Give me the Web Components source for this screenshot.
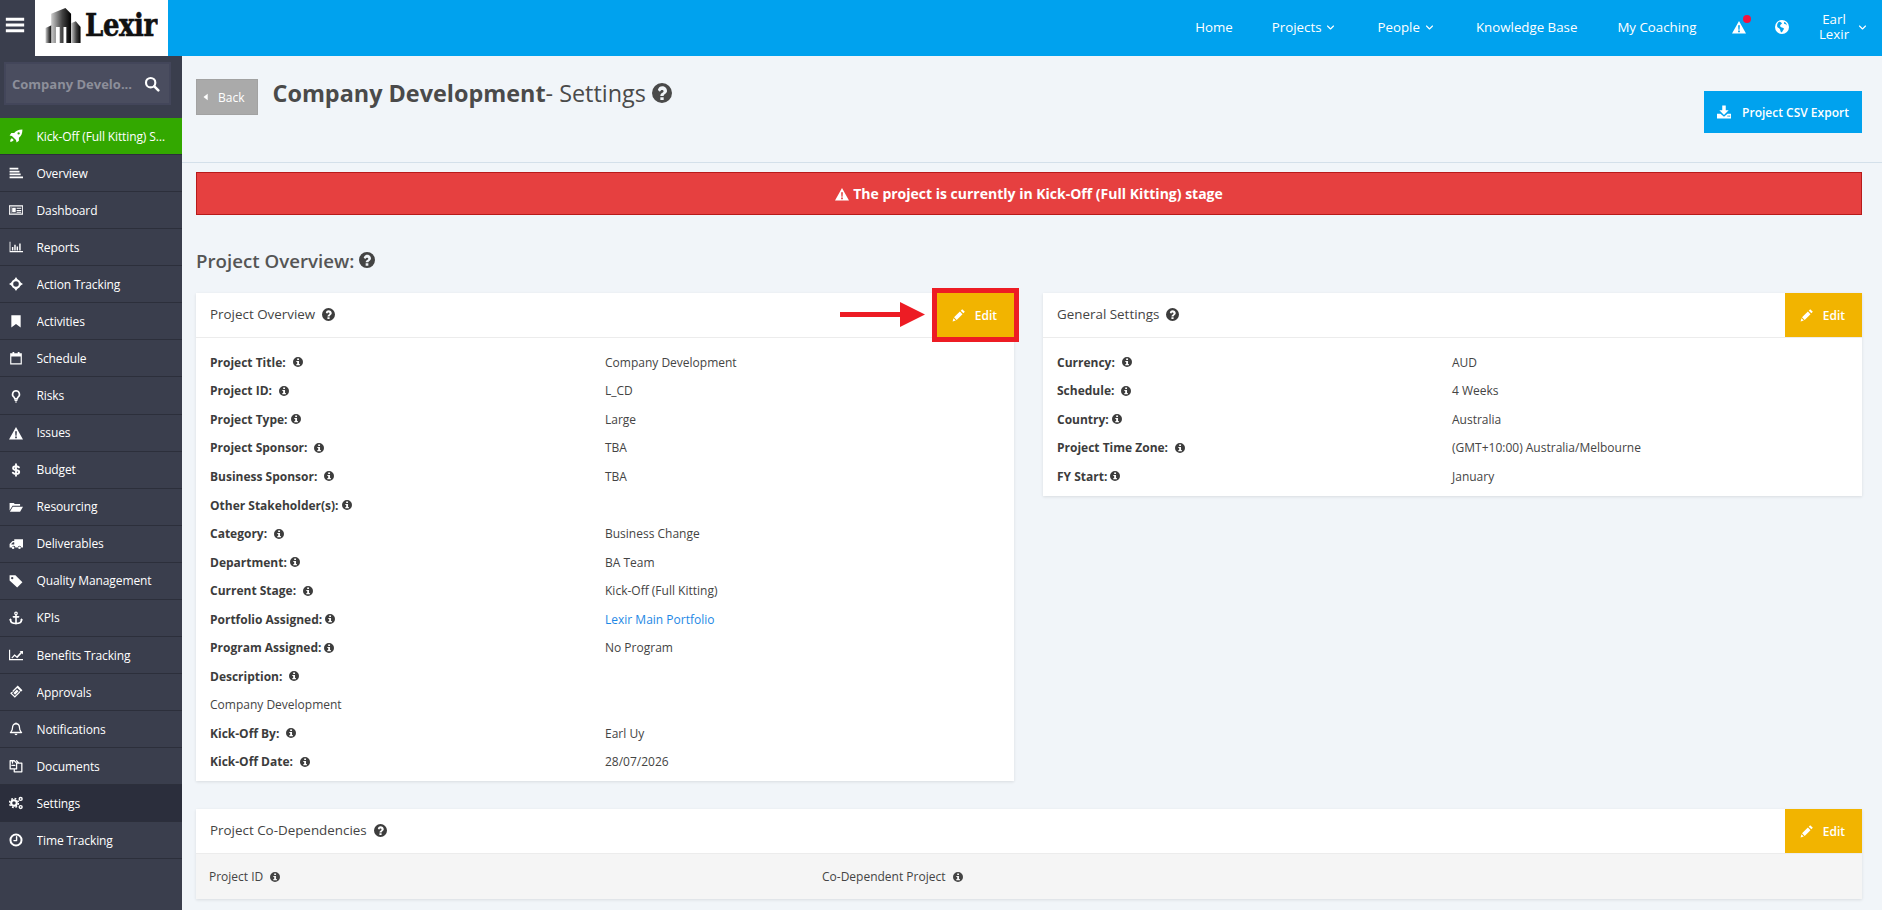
<!DOCTYPE html>
<html>
<head>
<meta charset="utf-8">
<title>Company Development - Settings</title>
<style>
  html, body { margin: 0; height: 100%; overflow: hidden; }
  body { font-family: "Open Sans", "Liberation Sans", sans-serif; font-size: 12px; color: #444; background: #f1f5f9; }
</style>
</head>
<body>
<app-shell>
  <top-bar slot="top"></top-bar>
  <side-nav slot="side">
    <nav-item icon="rocket" class="stage">Kick-Off (Full Kitting) Stage</nav-item>
    <nav-item icon="overview">Overview</nav-item>
    <nav-item icon="newspaper">Dashboard</nav-item>
    <nav-item icon="chart">Reports</nav-item>
    <nav-item icon="crosshairs">Action Tracking</nav-item>
    <nav-item icon="bookmark">Activities</nav-item>
    <nav-item icon="calendar">Schedule</nav-item>
    <nav-item icon="bulb">Risks</nav-item>
    <nav-item icon="warning">Issues</nav-item>
    <nav-item icon="dollar">Budget</nav-item>
    <nav-item icon="folder">Resourcing</nav-item>
    <nav-item icon="truck">Deliverables</nav-item>
    <nav-item icon="tag">Quality Management</nav-item>
    <nav-item icon="anchor">KPIs</nav-item>
    <nav-item icon="linechart">Benefits Tracking</nav-item>
    <nav-item icon="ticket">Approvals</nav-item>
    <nav-item icon="bell">Notifications</nav-item>
    <nav-item icon="files">Documents</nav-item>
    <nav-item icon="cogs" class="active">Settings</nav-item>
    <nav-item icon="clock">Time Tracking</nav-item>
  </side-nav>

  <page-header></page-header>
  <alert-banner>The project is currently in Kick-Off (Full Kitting) stage</alert-banner>
  <section-title>Project Overview:</section-title>

  <div class="cols" style="display:grid;grid-template-columns:818px 819px;column-gap:29px;align-items:start;">
    <info-card heading="Project Overview" marked>
      <info-row label="Project Title:">Company Development</info-row>
      <info-row label="Project ID:">L_CD</info-row>
      <info-row label="Project Type:" tight>Large</info-row>
      <info-row label="Project Sponsor:">TBA</info-row>
      <info-row label="Business Sponsor:">TBA</info-row>
      <info-row label="Other Stakeholder(s):" tight></info-row>
      <info-row label="Category:">Business Change</info-row>
      <info-row label="Department:" tight>BA Team</info-row>
      <info-row label="Current Stage:">Kick-Off (Full Kitting)</info-row>
      <info-row label="Portfolio Assigned:" tight><span style="color:#1e88e5">Lexir Main Portfolio</span></info-row>
      <info-row label="Program Assigned:" tight>No Program</info-row>
      <info-row label="Description:"></info-row>
      <info-row plain>Company Development</info-row>
      <info-row label="Kick-Off By:">Earl Uy</info-row>
      <info-row label="Kick-Off Date:">28/07/2026</info-row>
    </info-card>
    <info-card heading="General Settings">
      <info-row label="Currency:">AUD</info-row>
      <info-row label="Schedule:">4 Weeks</info-row>
      <info-row label="Country:" tight>Australia</info-row>
      <info-row label="Project Time Zone:">(GMT+10:00) Australia/Melbourne</info-row>
      <info-row label="FY Start:" tight>January</info-row>
    </info-card>
  </div>

  <info-card heading="Project Co-Dependencies" flush style="margin-top:28px">
    <table-head first="Project ID" second="Co-Dependent Project"></table-head>
  </info-card>
</app-shell>

<script>
// icons are drawn on a 24 box, all filled with currentColor unless the markup says otherwise
const S = 'fill="none" stroke="currentColor" stroke-linecap="round" stroke-linejoin="round"';
const ICONS = {
  rocket: '<path fill-rule="evenodd" d="M23 1c-7 0-11 2-14 6H4L1 11l4 1 7 7 1 4 4-3v-5c4-3 6-7 6-14zM16.500 5.500a2 2 0 1 1 0 4 2 2 0 0 1 0-4z"/><path d="M5 16c-2 1-3 3-3 6 3 0 5-1 6-3z"/>',
  overview: '<path d="M1 3h15v3H1zM1 8h17v3H1zM1 13h19v3H1zM1 18h23v3H1z"/>',
  newspaper: '<path fill-rule="evenodd" d="M0 4h24v16H0zM1.500 6v12h21V6zM3 7h1v10H3zM5.500 8h6v8h-6zM13 8h8v2h-8zM13 12h8v1.500h-8zM13 15h8v1.500h-8z"/>',
  chart: '<path d="M1 3h1.500v16H24v2H1zM5 12h2.500v6H5zM9 8h2.500v10H9zM13 11h2.500v7H13zM17.500 6H20v12h-2.500z"/>',
  crosshairs: `<circle cx="12" cy="12" r="6.500" ${S} stroke-width="3.400"/><path d="M12 0l3.500 5.500h-7zM12 24l3.500-5.500h-7zM0 12l5.500-3.500v7zM24 12l-5.500-3.500v7z"/>`,
  bookmark: '<path d="M4 2h16v21l-8-6-8 6z"/>',
  calendar: '<path fill-rule="evenodd" d="M2 4h4V1.500h3V4h6V1.500h3V4h4v19H2zM4 9.500V21h16V9.500z"/>',
  bulb: `<path ${S} stroke-width="2.800" d="M12 3a6 6 0 0 1 3.500 10.800c-.8.700-1.200 1.700-1.300 3.200H9.800c-.1-1.500-.5-2.500-1.300-3.200A6 6 0 0 1 12 3z"/><path d="M9.500 18.500h5v2h-5zM10.500 21.500h3V23h-3z"/>`,
  warning: '<path fill-rule="evenodd" d="M12 1.500L24 23H0zM10.500 9l.5 7.500h2l.5-7.500zM10.500 18v3h3v-3z"/>',
  dollar: `<path ${S} stroke-width="3.200" d="M17 7.500C16 6 14 5.500 12 5.500c-3 0-5 1.300-5 3.300 0 5 10.500 1.500 10.500 6.700 0 2-2.300 3.500-5.500 3.500-2.300 0-4.200-.8-5.500-2.500M12 2v20"/>`,
  folder: '<path d="M1 5h7l2 2h9v3H6l-5 8zM6.500 11.500H24L19 20H1.500z"/>',
  truck: '<path fill-rule="evenodd" d="M9 4h15v14h-3a3 3 0 0 0-6 0h-4a3 3 0 0 0-6 0H1v-6l5-5h3zM7 9l-3 3v1h5V9z"/><circle cx="7" cy="18.500" r="2.200"/><circle cx="18" cy="18.500" r="2.200"/>',
  tag: '<path fill-rule="evenodd" d="M1 2h10l12 12-9 9L1 11zM5.500 5a2 2 0 1 0 0 4 2 2 0 0 0 0-4z"/>',
  anchor: `<path ${S} stroke-width="2.800" d="M12 7v15M7.500 10h9M2.500 15c0 4 4 6.500 9.500 6.500s9.500-2.500 9.500-6.500"/><circle cx="12" cy="4" r="2.200" ${S} stroke-width="2"/><path d="M0 16l2.500-3.500L5 16zM19 16l2.500-3.500L24 16z"/>`,
  linechart: '<path d="M0 3h2v16h22v2H0z"/><path d="M4 16.500l5.500-6 4 3.500L20 7l-2-2h6v6l-2-2-8 8.500-4.300-3.600L5.500 18z"/>',
  ticket: '<path fill-rule="evenodd" d="M15 1l8 8-2 2-1-.5-1.500 1.500.5 1-9 9-8-8 2-2 1 .5 1.500-1.500-.5-1zM14 5L5 14l5 5 9-9z"/><path d="M13.500 7.500l3 3-6 6-3-3z"/>',
  bell: `<path ${S} stroke-width="2.200" d="M12 3c4 0 6 3 6 7 0 5 2 6 3.500 8h-19C4 16 6 15 6 10c0-4 2-7 6-7z"/><path d="M9.500 20h5a2.500 2.500 0 0 1-5 0zM11 1h2v2h-2z"/>`,
  files: `<path ${S} stroke-width="2.200" d="M2 3h7l4 4v10H2zM13 7h9v15H9v-5M6 7V3M17 7l-4-4"/><path ${S} stroke-width="2" d="M5 11h5"/>`,
  cogs: `<circle cx="8.500" cy="12" r="4.800" ${S} stroke-width="3.600"/><circle cx="8.500" cy="12" r="7.600" fill="none" stroke="currentColor" stroke-width="2.600" stroke-dasharray="3 3"/><circle cx="20" cy="5" r="2.500" ${S} stroke-width="2.400"/><circle cx="20" cy="19" r="2.500" ${S} stroke-width="2.400"/>`,
  clock: `<circle cx="12" cy="12" r="9.500" ${S} stroke-width="3.400"/><path ${S} stroke-width="2.400" d="M13 6.500V13H8.500"/>`,
  search: `<circle cx="10" cy="10" r="7" ${S} stroke-width="3.200"/><path ${S} stroke-width="3.800" d="M15.500 15.500l6 6"/>`,
  download: '<path d="M9 1h6v8h5l-8 8-8-8h5z"/><path fill-rule="evenodd" d="M0 15h6l6 5 6-5h6v8H0zM18 18v2h2v-2zM21 18v2h1.500v-2z"/>',
  chevron: `<path ${S} stroke-width="3" d="M4 8l8 8 8-8"/>`,
  globe: '<path fill-rule="evenodd" d="M12 0a12 12 0 1 1 0 24 12 12 0 0 1 0-24zM7 3C4 5 3 9 4 12c2 2 4 2 5 5 0 2 1 4 3 4 1-3 4-4 3-7-2-2-5-1-6-3-1-3 2-3 3-5-1-2-3-3-5-3zM16 3.500c-1 1-1 3 1 3.500s3 1 3.500 3c0-3-1.500-5.500-4.500-6.500z"/>',
  pencil: '<path d="M17.500 2l4.500 4.500-2.500 2.500L15 4.500zM13.500 6l4.500 4.500L8 20.500 3.500 16zM2.500 17.500l4 4L1 23z"/>',
  caret: '<path d="M16 4v16L6 12z"/>',
  info: '<path fill-rule="evenodd" d="M12 0a12 12 0 1 1 0 24 12 12 0 0 1 0-24zM10 3.500v3.800h4.500V3.500zM8 9.500v2.500h2v5H8v3h8.500v-3h-2V9.500z"/>',
  question: '<path fill-rule="evenodd" d="M12 0a12 12 0 1 1 0 24 12 12 0 0 1 0-24zM10 17v3.500h4V17zM7 8.500l2.500 1.900C10.200 9.300 11 8.500 12 8.500s1.900.6 1.900 1.500c0 1.900-3.900 2.100-3.900 5.500h4c0-2.100 4-2.700 4-5.800C18 6 15.300 4 12.200 4 9.800 4 8 5.300 7 8.500z"/>',
  bars: '<path d="M2 4h20v3.400H2zM2 10.300h20v3.400H2zM2 16.600h20V20H2z"/>'
};
const icon = (name, size, extra = '') =>
  `<svg width="${size}" height="${size}" viewBox="0 0 24 24" fill="currentColor" style="flex:none;display:block;${extra}">${ICONS[name]}</svg>`;

class AppShell extends HTMLElement {
  connectedCallback() {
    this.attachShadow({ mode: 'open' });
    this.shadowRoot.innerHTML = `
      <style>
        :host { display: grid; grid-template-columns: 182px 1fr; grid-template-rows: 56px 1fr; height: 910px; overflow: hidden; }
        .top { grid-column: 1 / 3; }
        main { padding: 0 20px 0 14px; min-width: 0; }
      </style>
      <div class="top"><slot name="top"></slot></div>
      <slot name="side"></slot>
      <main><slot></slot></main>
    `;
  }
}

class TopBar extends HTMLElement {
  connectedCallback() {
    this.attachShadow({ mode: 'open' });
    this.shadowRoot.innerHTML = `
      <style>
        :host { display: flex; height: 56px; background: #00a2ee; color: #fff; font-size: 13.3px; align-items: center; }
        .burger { box-sizing: border-box; width: 35px; height: 56px; padding: 0 5px 6px 0; background: #3a3e4d; display: flex; align-items: center; justify-content: center; }
        .logo { box-sizing: border-box; width: 133px; height: 56px; padding: 0 0 4px 10px; gap: 3px; background: #fff; display: flex; align-items: center; color: #111; overflow: hidden; }
        .logo b { font: bold 26px/30px "DejaVu Serif", serif; letter-spacing: -.4px; -webkit-text-stroke: .5px #111; transform: scaleY(1.2); transform-origin: 50% 100%; margin-top: 4px; }
        nav { margin-left: auto; display: flex; align-items: center; padding: 0 15px 2px 0; }
        nav span { display: flex; align-items: center; gap: 5px; white-space: nowrap; }
        .bell { position: relative; margin-left: 35px; }
        .dot { position: absolute; top: -5px; right: -5px; width: 8px; height: 8px; border-radius: 50%; background: #f3133f; }
        .user { display: block !important; text-align: center; line-height: 15px; margin-left: 27.5px; width: 36px; white-space: normal !important; }
      </style>
      <div class="burger">${icon('bars', 22)}</div>
      <div class="logo">
        <svg width="37" height="36" viewBox="0 0 38 38">
          <defs><linearGradient id="g" x1="0" x2="1" y1="0" y2="0"><stop offset="0" stop-color="#ccc"/><stop offset=".55" stop-color="#444"/><stop offset="1" stop-color="#000"/></linearGradient></defs>
          <path fill="url(#g)" d="M0 21l7-3v19H0z"/>
          <path fill="url(#g)" d="M6 6l15-6 6 6v31h-5V20h-3v17h-4V20h-4v17H6z"/>
          <path fill="url(#g)" d="M27 16l5-2 5 6v17H27z"/>
        </svg>
        <b>Lexir</b>
      </div>
      <nav>
        <span>Home</span>
        <span style="margin-left:39px">Projects ${icon('chevron', 9)}</span>
        <span style="margin-left:42px">People ${icon('chevron', 9)}</span>
        <span style="margin-left:42px">Knowledge Base</span>
        <span style="margin-left:40px">My Coaching</span>
        <span class="bell">${icon('warning', 14)}<i class="dot"></i></span>
        <span style="margin-left:29px">${icon('globe', 14)}</span>
        <span class="user">Earl Lexir</span>
        <span style="margin-left:6px">${icon('chevron', 9)}</span>
      </nav>
    `;
  }
}

class SideNav extends HTMLElement {
  connectedCallback() {
    this.attachShadow({ mode: 'open' });
    this.shadowRoot.innerHTML = `
      <style>
        :host { display: block; background: #3a3e4d; height: 854px; }
        .search { box-sizing: border-box; margin: 6px 11px 13px 4px; height: 43px; background: #4a4d5f; border: 2px solid #43465a; display: flex; align-items: center; padding: 0 9px 0 6px; justify-content: space-between; color: #fff; }
        .search span { font-weight: 700; font-size: 13px; color: #8d8f9a; white-space: nowrap; }
      </style>
      <div class="search"><span>Company Develo...</span>${icon('search', 16)}</div>
      <slot></slot>
    `;
  }
}

class NavItem extends HTMLElement {
  connectedCallback() {
    this.attachShadow({ mode: 'open' });
    this.shadowRoot.innerHTML = `
      <style>
        :host { display: flex; box-sizing: border-box; height: 37.08px; align-items: center; border-bottom: 1px solid #2c2f3b; color: #fff; font-size: 12px; letter-spacing: -.12px; }
        :host(.stage) { background: #33a800; height: 37px; }
        :host(.active) { background: #2b2e3c; }
        .ic { width: 32px; margin-right: 4.500px; display: flex; justify-content: center; }
        .tx { white-space: nowrap; overflow: hidden; text-overflow: ellipsis; width: 131px; }
      </style>
      <div class="ic">${icon(this.getAttribute('icon'), 14)}</div>
      <div class="tx"><slot></slot></div>
    `;
  }
}

class PageHeader extends HTMLElement {
  connectedCallback() {
    this.attachShadow({ mode: 'open' });
    this.shadowRoot.innerHTML = `
      <style>
        :host { display: flex; box-sizing: border-box; height: 107px; padding: 23px 20px 0 14px; margin: 0 -20px 0 -14px; border-bottom: 1px solid #d4e0ea; color: #4a4a4a; }
        .back { box-sizing: border-box; width: 62px; height: 36px; background: #aaa; border: 1px solid #a2a2a2; color: #fff; display: flex; align-items: center; gap: 7px; padding-left: 4px; font-size: 12px; }
        h1 { align-self: flex-start; margin: -4px 0 0 14.500px; font-size: 23.400px; font-weight: 700; line-height: 36px; height: 36px; display: flex; align-items: center; white-space: nowrap; }
        h1 span { font-weight: 400; }
        h1 svg { margin-left: 6px; }
        .csv { margin-left: auto; margin-top: 12px; box-sizing: border-box; width: 158px; height: 42px; background: #00a2ee; color: #fff; display: flex; align-items: center; justify-content: center; gap: 11px; font-size: 12px; font-weight: 600; }
      </style>
      <div class="back">${icon('caret', 10)} Back</div>
      <h1>Company Development<span>- Settings</span>${icon('question', 20)}</h1>
      <div class="csv">${icon('download', 14)} Project CSV Export</div>
    `;
  }
}

class AlertBanner extends HTMLElement {
  connectedCallback() {
    this.attachShadow({ mode: 'open' });
    this.shadowRoot.innerHTML = `
      <style>
        :host { display: flex; box-sizing: border-box; height: 43px; margin-top: 9px; background: #e64040; border: 1px solid #b81a1a; color: #fff; font-weight: 700; font-size: 14px; align-items: center; justify-content: center; gap: 4px; }
      </style>
      ${icon('warning', 14)} <slot></slot>
    `;
  }
}

class SectionTitle extends HTMLElement {
  connectedCallback() {
    this.attachShadow({ mode: 'open' });
    this.shadowRoot.innerHTML = `
      <style>
        :host { display: flex; align-items: center; gap: 5px; height: 78px; box-sizing: border-box; padding-top: 12px; font-size: 18.700px; font-weight: 600; color: #555; }
      </style>
      <slot></slot>${icon('question', 16, 'color:#444')}
    `;
  }
}

class InfoCard extends HTMLElement {
  connectedCallback() {
    const marked = this.hasAttribute('marked');
    this.attachShadow({ mode: 'open' });
    this.shadowRoot.innerHTML = `
      <style>
        :host { display: block; background: #fff; box-shadow: 0 1px 3px rgba(0,0,0,.1); }
        header { position: relative; box-sizing: border-box; height: 45px; padding: 0 0 2px 14px; border-bottom: 1px solid #ececec; display: flex; align-items: center; color: #444; font-size: 13.400px; font-weight: 500; gap: 7px; }
        .edit { position: absolute; top: 0; right: 0; width: 77px; height: 44px; background: #f2b400; color: #fff; display: flex; align-items: center; justify-content: center; gap: 9px; padding-right: 2px; box-sizing: border-box; font-size: 12px; font-weight: 600; }
        .edit.marked { outline: 5px solid #ed1c24; }
        .arrow { position: absolute; left: 644px; top: 9px; }
        .body { padding: 10px 0 5px; }
        :host([flush]) .body { padding: 0; }
      </style>
      <header>
        ${this.getAttribute('heading')} ${icon('question', 13, 'color:#3d3d3d')}
        ${marked ? '<svg class="arrow" width="85" height="25" viewBox="0 0 85 25"><path fill="#ed1c24" d="M0 10h60V0l25 12.500L60 25V15H0z"/></svg>' : ''}
        <div class="edit ${marked ? 'marked' : ''}">${icon('pencil', 14)} Edit</div>
      </header>
      <div class="body"><slot></slot></div>
    `;
  }
}

class InfoRow extends HTMLElement {
  connectedCallback() {
    const label = this.getAttribute('label');
    this.attachShadow({ mode: 'open' });
    this.shadowRoot.innerHTML = `
      <style>
        :host { display: flex; height: 28.550px; align-items: center; padding-left: 14px; font-size: 12px; color: #444; }
        .lb { width: 395px; flex: none; display: flex; align-items: center; font-weight: 700; color: #3c3c3c; gap: ${this.hasAttribute('tight') ? 3 : 7}px; }
      </style>
      ${this.hasAttribute('plain') ? '<slot></slot>' : `<div class="lb">${label} ${icon('info', 10, 'color:#3d3d3d')}</div><div><slot></slot></div>`}
    `;
  }
}

class TableHead extends HTMLElement {
  connectedCallback() {
    this.attachShadow({ mode: 'open' });
    this.shadowRoot.innerHTML = `
      <style>
        :host { display: flex; height: 45px; align-items: center; background: #f5f5f5; padding-left: 13px; font-size: 12px; color: #444; }
        div { display: flex; align-items: center; gap: 7px; }
        .a { width: 613px; }
      </style>
      <div class="a">${this.getAttribute('first')} ${icon('info', 10)}</div>
      <div>${this.getAttribute('second')} ${icon('info', 10)}</div>
    `;
  }
}

customElements.define('app-shell', AppShell);
customElements.define('top-bar', TopBar);
customElements.define('side-nav', SideNav);
customElements.define('nav-item', NavItem);
customElements.define('page-header', PageHeader);
customElements.define('alert-banner', AlertBanner);
customElements.define('section-title', SectionTitle);
customElements.define('info-card', InfoCard);
customElements.define('info-row', InfoRow);
customElements.define('table-head', TableHead);
</script>
</body>
</html>
